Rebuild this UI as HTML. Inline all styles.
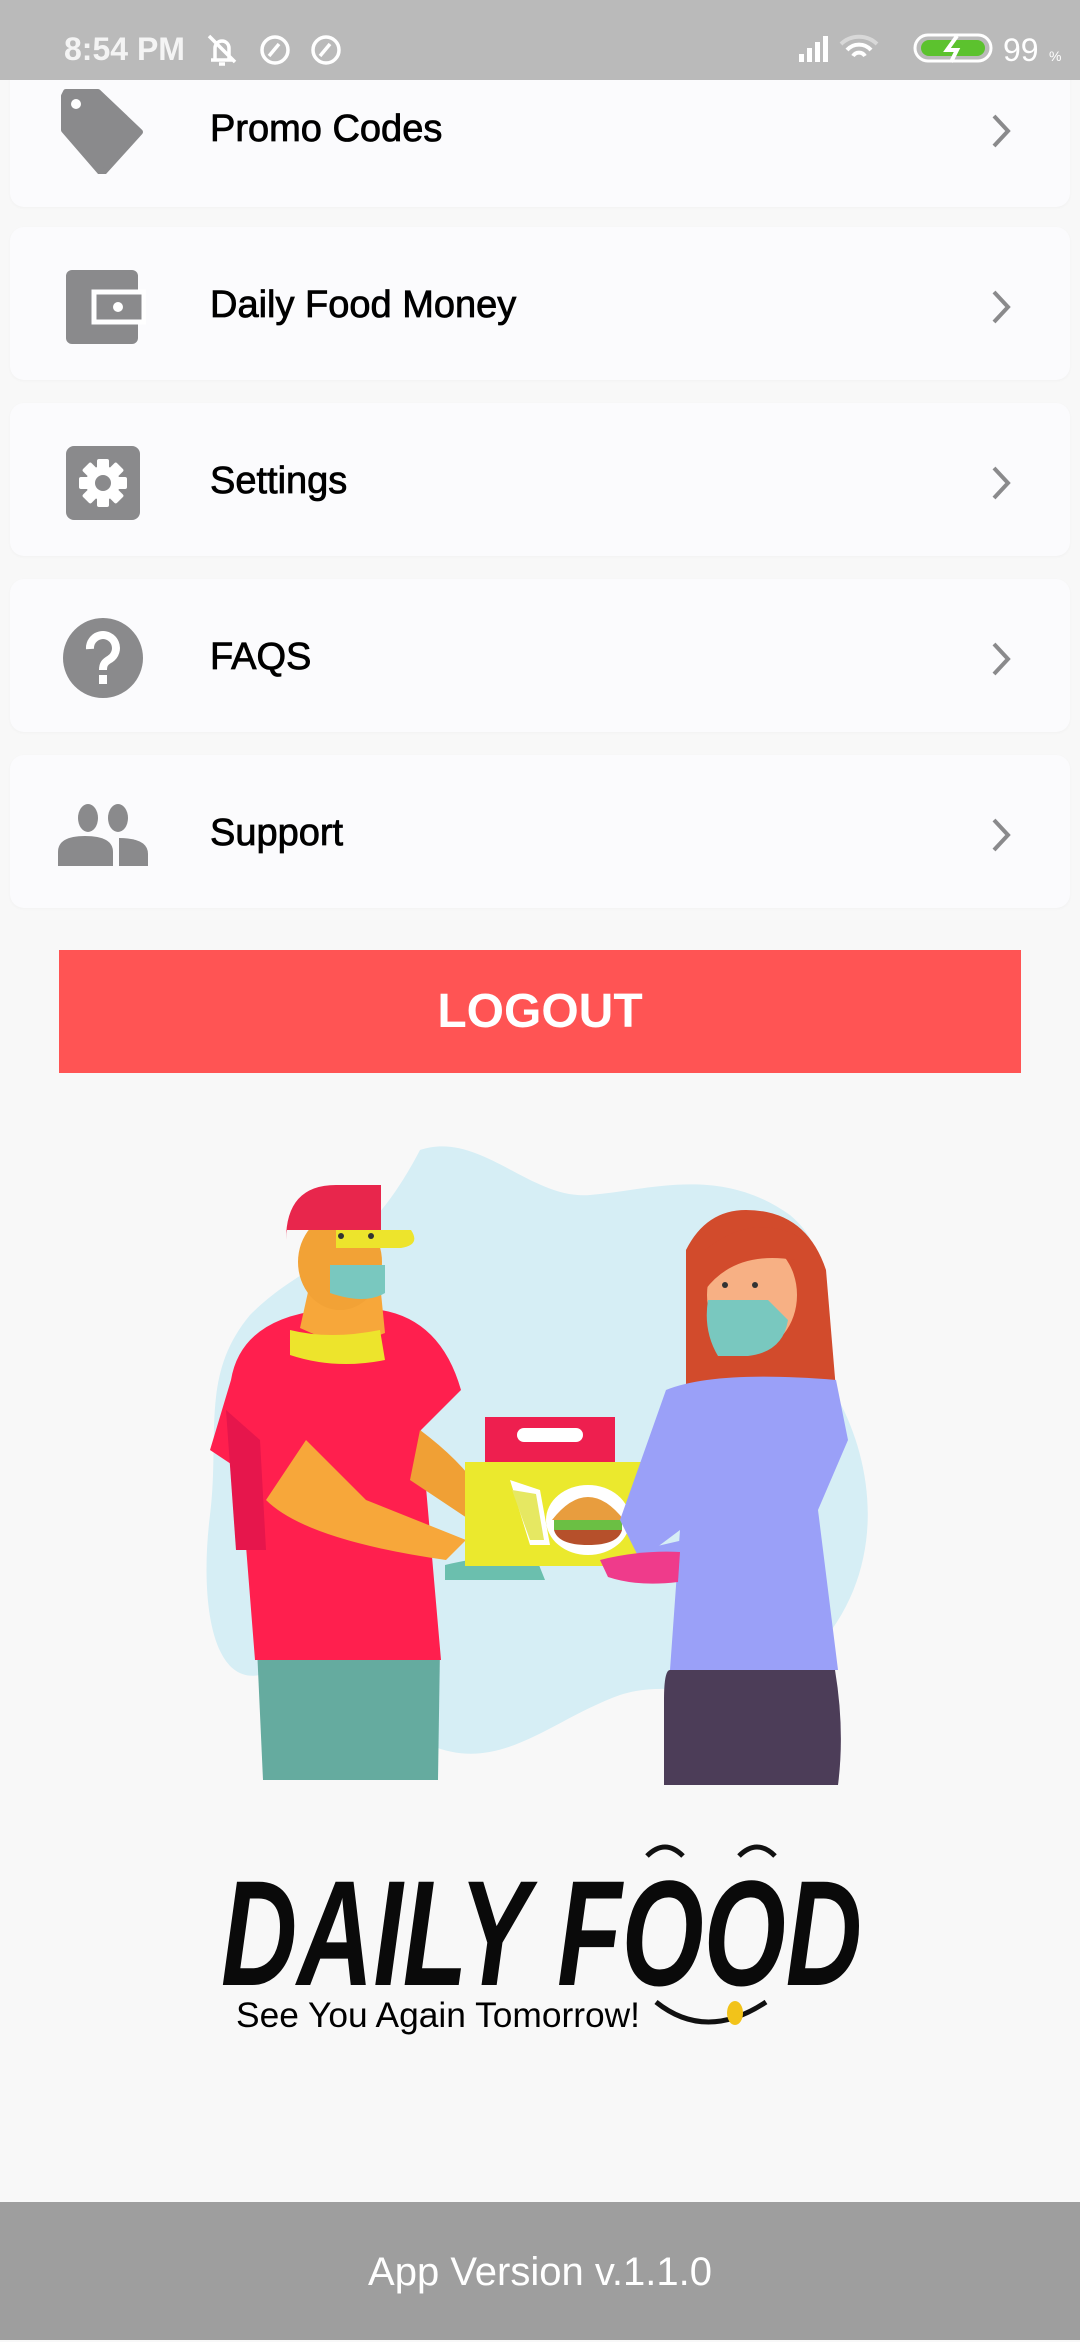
<!DOCTYPE html>
<html><head><meta charset="utf-8"><style>
*{margin:0;padding:0;box-sizing:border-box}
body{width:1080px;height:2340px;background:#f8f8f8;font-family:"Liberation Sans",sans-serif;position:relative;overflow:hidden}
.sb{position:absolute;left:0;top:0;width:1080px;height:80px;background:#bababa;color:#fff;z-index:5}
.card{position:absolute;left:10px;width:1060px;height:153px;background:#fbfbfd;border-radius:14px;box-shadow:0 1px 3px rgba(0,0,0,0.03)}
.lbl{position:absolute;left:210px;font-size:38px;color:#000;-webkit-text-stroke:0.8px #000}
.chev{position:absolute;left:990px}
.logout{position:absolute;left:59px;top:950px;width:962px;height:123px;background:#ff5454;color:#fff;font-size:48px;font-weight:bold;text-align:center;line-height:123px}
.foot{position:absolute;left:0;top:2202px;width:1080px;height:138px;background:#9e9e9e;color:#fff;font-size:40px;text-align:center;line-height:140px}
</style></head><body>
<div class="sb">
<div style="position:absolute;left:64px;top:31px;font-size:32px;font-weight:bold;color:#f4f4f4">8:54 PM</div>
<svg style="position:absolute;left:205px;top:32px" width="140" height="36" viewBox="0 0 140 36" fill="none" stroke="#fff" stroke-width="3.5">
<path d="M6 28h22M10 28V16a7 7 0 0 1 14 0v12M14 32h6M4 4l26 26"/>
<circle cx="70" cy="18" r="13"/><path d="M64 24l10-12"/>
<circle cx="121" cy="18" r="13"/><path d="M115 24l10-12"/>
</svg>
<svg style="position:absolute;left:795px;top:32px" width="270" height="32" viewBox="0 0 270 32">
<g fill="#fff"><rect x="4" y="22" width="5" height="8"/><rect x="12" y="16" width="5" height="14"/><rect x="20" y="10" width="5" height="20"/><rect x="28" y="4" width="5" height="26"/></g>
<path d="M46 12a26 26 0 0 1 36 0" stroke="#d8d8d8" stroke-width="4" fill="none"/>
<path d="M52 18a16 16 0 0 1 24 0M58 24a7 7 0 0 1 12 0" stroke="#fff" stroke-width="4" fill="none"/>
<rect x="120" y="3" width="76" height="26" rx="13" fill="none" stroke="#fff" stroke-width="3"/>
<rect x="126" y="8" width="64" height="16" rx="8" fill="#5cc22e"/>
<path d="M162 4l-10 14h10l-6 12" stroke="#fff" stroke-width="4" fill="none"/>
<text x="208" y="29" font-size="32" fill="#fff" font-family="Liberation Sans">99</text><text x="254" y="29" font-size="14" fill="#fff">%</text>
</svg>
</div>

<div class="card" style="top:54px"></div>
<div class="card" style="top:227px"></div>
<div class="card" style="top:403px"></div>
<div class="card" style="top:579px"></div>
<div class="card" style="top:755px"></div>

<svg style="position:absolute;left:60px;top:88px" width="86" height="86" viewBox="0 0 86 86"><path d="M6 4h32l42 40-38 42L4 42V8z" fill="#8a8a8c" stroke="#8a8a8c" stroke-width="6" stroke-linejoin="round"/><circle cx="16" cy="16" r="5" fill="#fff"/></svg>
<div class="lbl" style="top:108px">Promo Codes</div>
<svg style="position:absolute;left:66px;top:270px" width="80" height="74" viewBox="0 0 80 74"><rect x="0" y="0" width="72" height="74" rx="6" fill="#8a8a8c"/><rect x="28" y="22" width="50" height="30" fill="#8a8a8c" stroke="#fff" stroke-width="5"/><circle cx="52" cy="37" r="5" fill="#fff"/></svg>
<div class="lbl" style="top:284px">Daily Food Money</div>
<svg style="position:absolute;left:66px;top:446px" width="74" height="74" viewBox="0 0 74 74"><rect width="74" height="74" rx="8" fill="#8a8a8c"/><g transform="translate(37 37)" fill="#fff"><circle r="17"/><g id="t"><rect x="-6" y="-24" width="12" height="48" rx="2"/></g><use href="#t" transform="rotate(45)"/><use href="#t" transform="rotate(90)"/><use href="#t" transform="rotate(135)"/><circle r="8" fill="#8a8a8c"/></g></svg>
<div class="lbl" style="top:460px">Settings</div>
<svg style="position:absolute;left:62px;top:617px" width="82" height="82" viewBox="0 0 82 82"><circle cx="41" cy="41" r="40" fill="#8a8a8c"/><path d="M28 32a13 13 0 1 1 20 10c-5 3-7 5-7 11" stroke="#fff" stroke-width="8" fill="none"/><rect x="37" y="58" width="8" height="9" fill="#fff"/></svg>
<div class="lbl" style="top:636px">FAQS</div>
<svg style="position:absolute;left:58px;top:804px" width="90" height="62" viewBox="0 0 90 62"><ellipse cx="30" cy="14" rx="10" ry="14" fill="#8a8a8c"/><ellipse cx="60" cy="14" rx="10" ry="14" fill="#8a8a8c"/><path d="M0 62V48q0-16 27-16 28 0 28 16v14z" fill="#8a8a8c"/><path d="M61 62V34q29 0 29 16v12z" fill="#8a8a8c"/></svg>
<div class="lbl" style="top:812px">Support</div>

<svg class="chev" style="top:113px" width="24" height="36" viewBox="0 0 24 36"><path d="M4 3l14 15L4 33" stroke="#8a8a8c" stroke-width="4" fill="none"/></svg>
<svg class="chev" style="top:289px" width="24" height="36" viewBox="0 0 24 36"><path d="M4 3l14 15L4 33" stroke="#8a8a8c" stroke-width="4" fill="none"/></svg>
<svg class="chev" style="top:465px" width="24" height="36" viewBox="0 0 24 36"><path d="M4 3l14 15L4 33" stroke="#8a8a8c" stroke-width="4" fill="none"/></svg>
<svg class="chev" style="top:641px" width="24" height="36" viewBox="0 0 24 36"><path d="M4 3l14 15L4 33" stroke="#8a8a8c" stroke-width="4" fill="none"/></svg>
<svg class="chev" style="top:817px" width="24" height="36" viewBox="0 0 24 36"><path d="M4 3l14 15L4 33" stroke="#8a8a8c" stroke-width="4" fill="none"/></svg>

<div class="logout">LOGOUT</div>

<svg style="position:absolute;left:0;top:1100px" width="1080" height="960" viewBox="0 1100 1080 960">
<path d="M420 1150c60-20 110 50 170 45 60-5 130-30 200 20 60 50 10 120 40 170 50 80 60 200-30 280-60 50-120 10-180 30-70 25-120 80-190 50-60-25-110-80-170-70-50 10-60-80-50-160 10-80-10-140 40-200 60-60 110-50 170-165z" fill="#d6eef5"/>
<path d="M263 1780l-6-132h183l-2 132z" fill="#65ab9f"/>
<path d="M231 1380q10-60 90-70h60q60 10 80 80l-40 40 20 230H255l-15-190-30-20z" fill="#ff1f4e"/>
<path d="M226 1410l10 140h30l-6-110z" fill="#e6164c"/>
<path d="M266 1500q40 40 180 60l20-20-100-40-60-60z" fill="#f7a73a"/>
<path d="M420 1430q40 30 60 60l-10 30-60-40z" fill="#f0a035"/>
<path d="M445 1565q40-10 90-10l10 25h-100z" fill="#6bbfae"/>
<path d="M300 1328l10-45h70l5 50-40 15z" fill="#f7a73a"/>
<path d="M290 1330q40 10 90 0l5 30q-50 10-95-5z" fill="#ede42c"/>
<ellipse cx="340" cy="1262" rx="42" ry="48" fill="#f2a236"/>
<path d="M330 1265h55v28q-20 12-55 0z" fill="#79c8bf"/>
<path d="M286 1240q0-55 50-55h45v45h-95z" fill="#e8264c"/>
<path d="M336 1230h75q10 15-10 18h-65z" fill="#ede42c"/>
<circle cx="341" cy="1236" r="3" fill="#333"/><circle cx="371" cy="1236" r="3" fill="#333"/>
<path d="M485 1462v-45h130v45z" fill="#ee1f4f"/><rect x="517" y="1428" width="66" height="14" rx="7" fill="#fff"/>
<rect x="465" y="1462" width="187" height="104" fill="#ebe92d"/>
<ellipse cx="588" cy="1520" rx="42" ry="35" fill="#fff"/><path d="M552 1520q36-46 72 0z" fill="#e89d3e"/><rect x="554" y="1520" width="68" height="10" fill="#6bbf44"/><path d="M554 1530h68q-4 15-34 15t-34-15z" fill="#b6502b"/>
<path d="M510 1480l20 65h20l-10-55z" fill="#fff"/><path d="M512 1490l18 50h14l-8-46z" fill="#e6e862"/>
<path d="M686 1250q20-40 60-40 60 0 80 60l10 120h-150z" fill="#d24b2c"/>
<ellipse cx="752" cy="1295" rx="45" ry="55" fill="#f7b084"/>
<path d="M705 1290q30-40 90-30l10-20q-50-30-100 10z" fill="#d24b2c"/>
<path d="M708 1300h60l20 20q-5 32-40 36h-30q-15-25-10-56z" fill="#79c8bf"/>
<circle cx="725" cy="1285" r="3" fill="#333"/><circle cx="755" cy="1285" r="3" fill="#333"/>
<path d="M666 1390q50-20 170-10l12 60-30 70 20 160H670l10-140-40 30-20-40z" fill="#9aa0f8"/>
<path d="M640 1550l-20 30 55-5 30-40z" fill="#9aa0f8"/>
<path d="M600 1560q40-10 80-8l-2 30q-40 5-70-5z" fill="#ef3b8b"/>
<path d="M664 1700q0-30 6-30h165q10 60 3 115H664z" fill="#4c3d58"/>
<text x="221" y="1985" font-family="Liberation Sans" font-weight="bold" font-style="italic" font-size="150" fill="#0a0a0a" textLength="641" lengthAdjust="spacingAndGlyphs">DAILY FOOD</text>
<path d="M647 1856q18-18 36 0M739 1856q18-18 36 0" stroke="#111" stroke-width="5" fill="none"/>
<text x="236" y="2027" font-family="Liberation Sans" font-size="35" fill="#000" textLength="404" lengthAdjust="spacingAndGlyphs">See You Again Tomorrow!</text>
<path d="M656 2002q50 40 110 0" stroke="#111" stroke-width="5" fill="none"/><ellipse cx="735" cy="2013" rx="8" ry="12" fill="#f2c31a"/>
</svg>

<div class="foot">App Version v.1.1.0</div>
</body></html>
